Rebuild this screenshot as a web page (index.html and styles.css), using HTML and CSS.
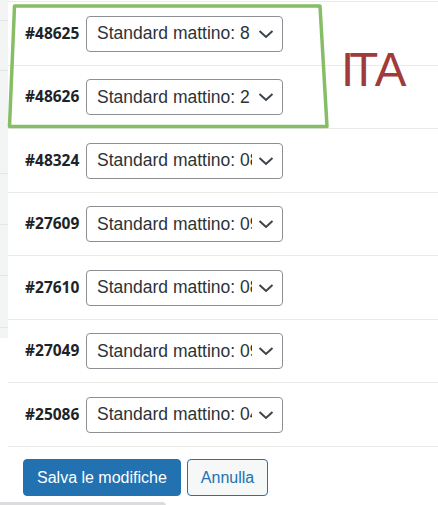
FILE: index.html
```html
<!DOCTYPE html>
<html lang="it">
<head>
<meta charset="utf-8">
<title>Orari</title>
<link rel="stylesheet" href="styles.css">
</head>
<body>
<div class="page">
  <div class="rows">
    <div class="row"><span class="id">#48625</span><div class="sel"><span class="val">Standard mattino: 8 ore</span><svg class="chev" viewBox="0 0 16 16" width="16" height="16"><path d="M1.5 5 L8 11 L14.5 5"/></svg></div></div>
    <div class="row"><span class="id">#48626</span><div class="sel"><span class="val">Standard mattino: 2 ore</span><svg class="chev" viewBox="0 0 16 16" width="16" height="16"><path d="M1.5 5 L8 11 L14.5 5"/></svg></div></div>
    <div class="row"><span class="id">#48324</span><div class="sel"><span class="val">Standard mattino: 08:00 - 12:00</span><svg class="chev" viewBox="0 0 16 16" width="16" height="16"><path d="M1.5 5 L8 11 L14.5 5"/></svg></div></div>
    <div class="row"><span class="id">#27609</span><div class="sel"><span class="val">Standard mattino: 09:00 - 12:00</span><svg class="chev" viewBox="0 0 16 16" width="16" height="16"><path d="M1.5 5 L8 11 L14.5 5"/></svg></div></div>
    <div class="row"><span class="id">#27610</span><div class="sel"><span class="val">Standard mattino: 08:30 - 12:30</span><svg class="chev" viewBox="0 0 16 16" width="16" height="16"><path d="M1.5 5 L8 11 L14.5 5"/></svg></div></div>
    <div class="row"><span class="id">#27049</span><div class="sel"><span class="val">Standard mattino: 09:30 - 12:30</span><svg class="chev" viewBox="0 0 16 16" width="16" height="16"><path d="M1.5 5 L8 11 L14.5 5"/></svg></div></div>
    <div class="row"><span class="id">#25086</span><div class="sel"><span class="val">Standard mattino: 04:00 - 08:00</span><svg class="chev" viewBox="0 0 16 16" width="16" height="16"><path d="M1.5 5 L8 11 L14.5 5"/></svg></div></div>
  </div>
  <div class="actions">
    <button class="btn btn-primary" type="button">Salva le modifiche</button>
    <button class="btn btn-secondary" type="button">Annulla</button>
  </div>
  <div class="scroll-thumb"></div>

  <svg class="mark" width="340" height="135" viewBox="0 0 340 135"><polygon points="14.5,6 320,6 327,126.5 9.5,126.5"/></svg>
  <span class="ita"><span class="ita-i">I</span>TA</span>
</div>
</body>
</html>
```
FILE: styles.css
```css
html, body {
  margin: 0;
  padding: 0;
  background: #fff;
  overflow: hidden;
}

.page {
  position: relative;
  width: 438px;
  height: 505px;
  padding: 1px 0 0 8px;
  box-sizing: border-box;
  font-family: "Liberation Sans", Arial, sans-serif;
  background:
    linear-gradient(#e4e5e6, #e4e5e6) 0 20px / 8px 1px no-repeat,
    linear-gradient(#e4e5e6, #e4e5e6) 0 70px / 8px 1px no-repeat,
    linear-gradient(#e4e5e6, #e4e5e6) 0 173px / 8px 1px no-repeat,
    linear-gradient(#e4e5e6, #e4e5e6) 0 224px / 8px 1px no-repeat,
    linear-gradient(#e4e5e6, #e4e5e6) 0 275px / 8px 1px no-repeat,
    linear-gradient(#e4e5e6, #e4e5e6) 0 327px / 8px 1px no-repeat,
    linear-gradient(#f3f4f4, #f3f4f4) 0 0 / 8px 338px no-repeat,
    #fff;
}

.rows {
  border-bottom: 1px solid #ebebec;
}

.row {
  display: flex;
  align-items: center;
  height: 64px;
  box-sizing: border-box;
  border-top: 1px solid #ebebec;
  padding-left: 17px;
}

.row:nth-child(even) {
  height: 63px;
}

.id {
  flex: none;
  width: 61px;
  margin-bottom: 2px;
  font-family: "Open Sans", "Liberation Sans", sans-serif;
  font-weight: 700;
  font-size: 15.5px;
  color: #1d2327;
}

.sel {
  flex: none;
  display: flex;
  align-items: center;
  width: 197px;
  height: 36px;
  box-sizing: border-box;
  border: 1px solid #8c8f94;
  border-radius: 4px;
  background: #fff;
  padding: 0 8px 0 10px;
}

.val {
  width: 155px;
  overflow: hidden;
  white-space: nowrap;
  font-size: 17.5px;
  color: #2c3338;
}

.chev {
  margin-left: auto;
  fill: none;
  stroke: #3c434a;
  stroke-width: 2;
}

.actions {
  display: flex;
  gap: 6px;
  padding: 12px 0 0 15px;
}

.btn {
  height: 37px;
  box-sizing: border-box;
  border-radius: 4px;
  font-family: "Liberation Sans", Arial, sans-serif;
  font-size: 16px;
  padding: 0 13px;
  border: 1px solid #2271b1;
  cursor: pointer;
}

.btn-primary {
  background: #2271b1;
  color: #fff;
}

.btn-secondary {
  background: #f6f7f7;
  color: #2271b1;
}

.scroll-thumb {
  margin: 6px 0 0 -8px;
  width: 166px;
  height: 8px;
  border-radius: 0 4px 4px 0;
  background: #dcdcde;
}

.mark {
  position: absolute;
  left: 0;
  top: 0;
}

.mark polygon {
  fill: none;
  stroke: #86bd66;
  stroke-width: 3.5;
  stroke-linejoin: round;
}

.ita {
  position: absolute;
  left: 341px;
  top: 46px;
  font-family: "Liberation Sans", Arial, sans-serif;
  font-size: 47.5px;
  line-height: 1;
  color: #a03a3b;
}

.ita-i {
  letter-spacing: -5px;
}
```
